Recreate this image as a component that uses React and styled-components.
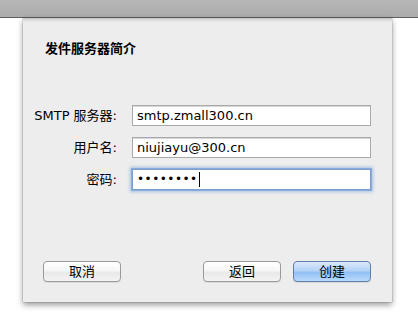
import React from "react";
import styled, { createGlobalStyle } from "styled-components";

const GlobalStyle = createGlobalStyle`
  html, body {
    margin: 0;
    padding: 0;
    background: #ffffff;
  }
  body {
    font-family: "DejaVu Sans", "Noto Sans CJK SC", sans-serif;
    font-size: 13px;
    color: #000;
  }
`;

const Screen = styled.div`
  width: 418px;
  height: 322px;
  overflow: hidden;
`;

const TitleBar = styled.div`
  height: 18px;
  background: linear-gradient(#b6b6b6, #acacac);
  border-bottom: 1px solid #606060;
  box-sizing: border-box;
`;

const Sheet = styled.div`
  margin-left: 23px;
  width: 369px;
  height: 284px;
  background: #ededed;
  box-shadow: 0 3px 6px rgba(0, 0, 0, 0.4), 0 0 1px rgba(0, 0, 0, 0.5),
    inset 0 6px 5px -6px rgba(0, 0, 0, 0.35);
  display: flex;
  flex-direction: column;
  box-sizing: border-box;
  padding-top: 23px;
  padding-bottom: 20px;
`;

const Title = styled.h1`
  margin: 0;
  padding-left: 22px;
  font-size: 13px;
  line-height: 16px;
  font-weight: bold;
`;

const Form = styled.div`
  margin-top: 48px;
  display: grid;
  grid-template-columns: 109px 239px;
  row-gap: 11px;
  align-items: center;
`;

const Label = styled.div`
  text-align: right;
  padding-right: 15px;
  line-height: 21px;
  white-space: nowrap;
`;

const Field = styled.div`
  height: 21px;
  box-sizing: border-box;
  background: #fff;
  border: 1px solid ${(p) => (p.$focused ? "#7b9fd0" : "#a9a9a9")};
  box-shadow: ${(p) =>
    p.$focused
      ? "0 0 0 1px rgba(125, 165, 220, 0.8), 0 0 3px 2px rgba(125, 165, 220, 0.6)"
      : "inset 0 1px 0 #d8d8d8"};
  padding: 0 4px;
  line-height: 19px;
  display: flex;
  align-items: center;
  white-space: nowrap;
`;

const Dots = styled.span`
  letter-spacing: 0.5px;
  font-size: 12px;
`;

const Caret = styled.span`
  display: inline-block;
  width: 1px;
  height: 15px;
  background: #000;
  margin-left: 1px;
`;

const Actions = styled.div`
  margin-top: auto;
  display: flex;
  padding: 0 21px 0 20px;
  gap: 12px;
`;

const Spacer = styled.div`
  flex: 1;
`;

const Button = styled.button`
  width: 78px;
  height: 21px;
  box-sizing: border-box;
  border-radius: 4px;
  font-family: "DejaVu Sans", "Noto Sans CJK SC", sans-serif;
  font-size: 13px;
  line-height: 19px;
  padding: 0;
  color: #000;
  border: 1px solid ${(p) => (p.$primary ? "#5f7fae" : "#9a9a9a")};
  background: ${(p) =>
    p.$primary
      ? "linear-gradient(#dbe9fb 0%, #b4d2f7 45%, #92c0f4 55%, #b9dafc 100%)"
      : "linear-gradient(#ffffff 0%, #f6f6f6 45%, #e9e9e9 55%, #f3f3f3 100%)"};
  box-shadow: 0 1px 0 rgba(0, 0, 0, 0.08);
`;

export default function App() {
  return (
    <Screen>
      <GlobalStyle />
      <TitleBar />
      <Sheet>
        <Title>发件服务器简介</Title>
        <Form>
          <Label>SMTP 服务器:</Label>
          <Field>smtp.zmall300.cn</Field>
          <Label>用户名:</Label>
          <Field>niujiayu@300.cn</Field>
          <Label>密码:</Label>
          <Field $focused>
            <Dots>••••••••</Dots>
            <Caret />
          </Field>
        </Form>
        <Actions>
          <Button>取消</Button>
          <Spacer />
          <Button>返回</Button>
          <Button $primary>创建</Button>
        </Actions>
      </Sheet>
    </Screen>
  );
}
